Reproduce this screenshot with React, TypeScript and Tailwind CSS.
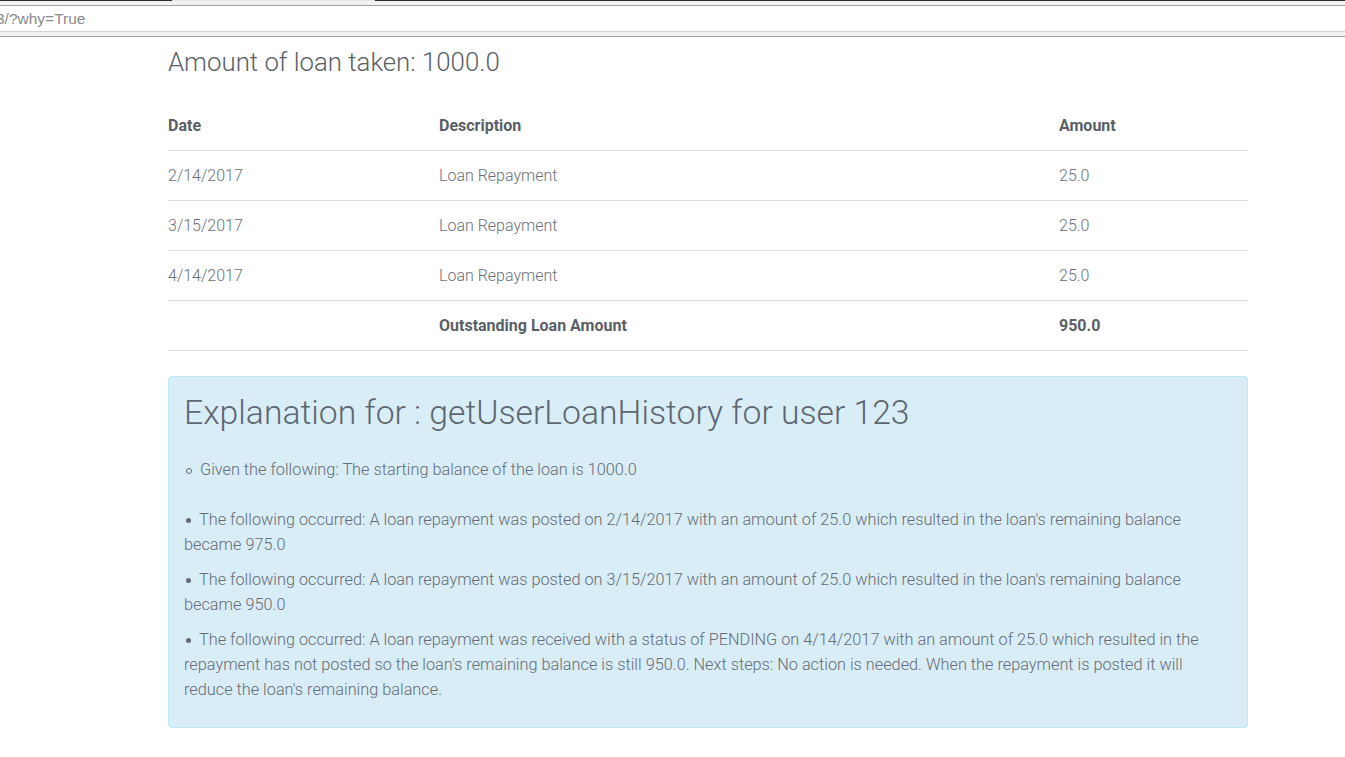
const rows = [
  { date: "2/14/2017", desc: "Loan Repayment", amount: "25.0" },
  { date: "3/15/2017", desc: "Loan Repayment", amount: "25.0" },
  { date: "4/14/2017", desc: "Loan Repayment", amount: "25.0" },
];

const events = [
  "The following occurred: A loan repayment was posted on 2/14/2017 with an amount of 25.0 which resulted in the loan's remaining balance became 975.0",
  "The following occurred: A loan repayment was posted on 3/15/2017 with an amount of 25.0 which resulted in the loan's remaining balance became 950.0",
  "The following occurred: A loan repayment was received with a status of PENDING on 4/14/2017 with an amount of 25.0 which resulted in the repayment has not posted so the loan's remaining balance is still 950.0. Next steps: No action is needed. When the repayment is posted it will reduce the loan's remaining balance.",
];

const BrowserBar = () => (
  <div className="h-[37px] bg-[#f2f1ef] flex flex-col">
    <div className="flex h-px">
      <div className="w-[172px] bg-[#2a2a28]" />
      <div className="w-[203px] bg-[#e6e5e3]" />
      <div className="flex-1 bg-[#2a2a28]" />
    </div>
    <div className="h-[4px]" />
    <div className="h-px bg-[#a3a3a3]" />
    <div className="h-[25px] bg-white flex items-center overflow-hidden">
      <span className="-ml-[4px] text-[15.5px] text-[#8a8a8a] font-['Liberation_Sans',sans-serif] leading-none">
        3/?why=True
      </span>
    </div>
    <div className="h-px bg-[#d3d3d1]" />
    <div className="flex-1" />
    <div className="h-px bg-[#9d9d9d]" />
  </div>
);

export default function App() {
  return (
    <div className="min-h-screen bg-white font-['Roboto',sans-serif] font-light">
      <BrowserBar />
      <div className="w-[1080px] ml-[168px]">
        <h2 className="mt-[7px] text-[25.8px] leading-[36px] text-[#5a5f66]">
          Amount of loan taken: 1000.0
        </h2>

        <div className="mt-[21px] text-[16px] text-[#6b717a]">
          <div className="flex h-[50px] items-center border-b border-[#dddddd] font-bold text-[#5a5f66]">
            <div className="w-[271px]">Date</div>
            <div className="w-[620px]">Description</div>
            <div className="flex-1">Amount</div>
          </div>
          {rows.map((r) => (
            <div
              key={r.date}
              className="flex h-[50px] items-center border-b border-[#dddddd]"
            >
              <div className="w-[271px]">{r.date}</div>
              <div className="w-[620px]">{r.desc}</div>
              <div className="flex-1">{r.amount}</div>
            </div>
          ))}
          <div className="flex h-[50px] items-center border-b border-[#dddddd] font-bold text-[#5a5f66]">
            <div className="w-[271px]" />
            <div className="w-[620px]">Outstanding Loan Amount</div>
            <div className="flex-1">950.0</div>
          </div>
        </div>

        <div className="mt-[25px] h-[352px] rounded-[4px] border border-[#bce8f1] bg-[#d9edf7] px-[15px] pt-[16px] text-[#656c75]">
          <h1 className="text-[33.7px] leading-[40px] text-[#5e6771]">
            Explanation for : getUserLoanHistory for user 123
          </h1>
          <ul className="mt-[24px] text-[16.3px] leading-[25px]">
            <li>
              <span className="ml-[2px] mr-[8px] inline-block h-[6px] w-[6px] rounded-full border border-current align-middle" />
              Given the following: The starting balance of the loan is 1000.0
            </li>
          </ul>
          <ul className="mt-[25px] text-[16.3px] leading-[25px]">
            {events.map((e, i) => (
              <li key={i} className="mb-[10px]">
                <span className="ml-[2px] mr-[8px] inline-block h-[5px] w-[5px] rounded-full bg-current align-middle" />
                {e}
              </li>
            ))}
          </ul>
        </div>
      </div>
    </div>
  );
}
